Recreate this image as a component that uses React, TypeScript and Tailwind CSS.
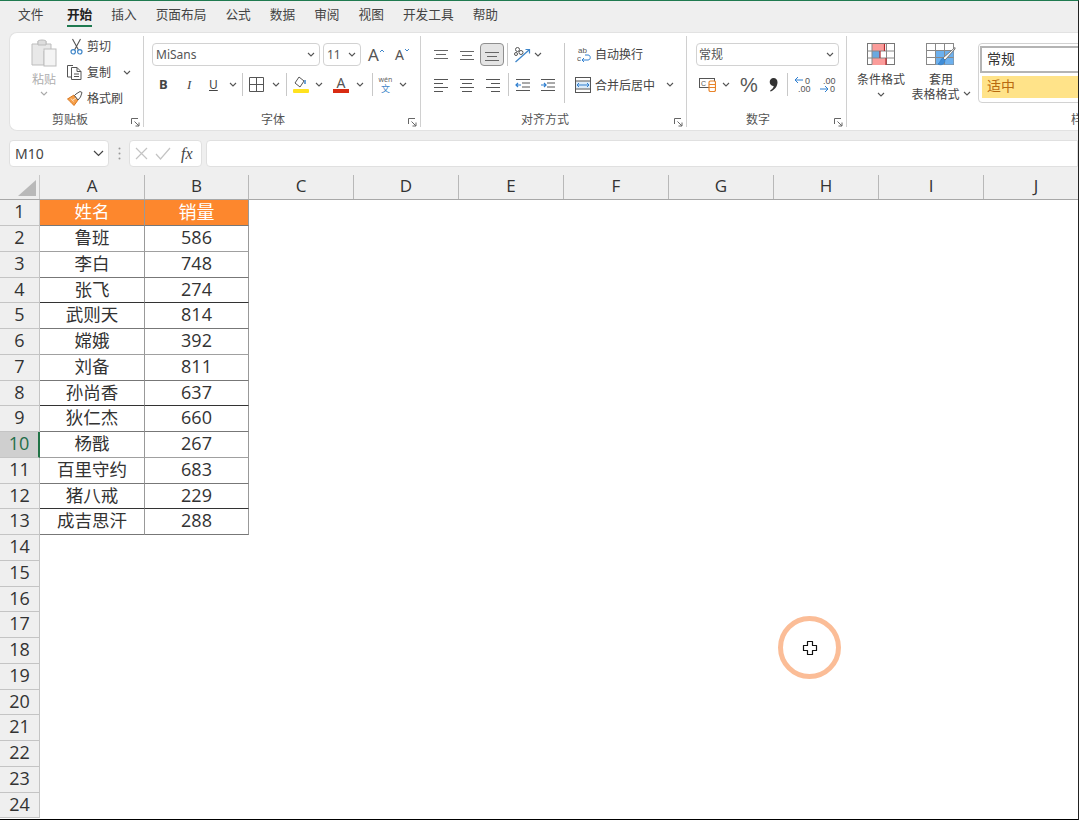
import React from "react";

const FONT = { fontFamily: '"Noto Sans CJK SC", "Noto Sans", sans-serif' };
const LATIN = { fontFamily: '"Noto Sans", sans-serif' };

const Chev = ({ className = "" }: { className?: string }) => (
  <svg width="8" height="5" viewBox="0 0 8 5" className={"shrink-0 " + className} fill="none" stroke="#555" strokeWidth="1.1">
    <path d="M1 1l3 3 3-3" />
  </svg>
);

const Launcher = () => (
  <svg width="9" height="9" viewBox="0 0 9 9" fill="none" stroke="#666" strokeWidth="1" className="absolute right-[3px] bottom-[0px]">
    <path d="M.5 6V.5H7M3.5 3.5L8 8M8 4.5V8H4.5" />
  </svg>
);

const Sep = ({ className = "" }: { className?: string }) => <div className={"w-px h-[23px] shrink-0 bg-[#c8c8c8] " + className} />;

const Lines = ({ kind }: { kind: "l" | "c" | "r" }) => {
  const ws = kind === "l" ? [[1, 15], [1, 10], [1, 15], [1, 10]] : kind === "c" ? [[1, 15], [3, 13], [1, 15], [3, 13]] : [[1, 15], [6, 15], [1, 15], [6, 15]];
  return (
    <svg width="16" height="16" viewBox="0 0 16 16" stroke="#555" strokeWidth="1" className="shrink-0">
      {ws.map(([a, b], i) => (
        <path key={i} d={`M${a} ${2.5 + i * 4}H${b}`} />
      ))}
    </svg>
  );
};

const VAlign = ({ pos }: { pos: number }) => (
  <svg width="16" height="14" viewBox="0 0 16 14" stroke="#666" strokeWidth="1" className="shrink-0">
    <path d={`M1 ${pos + 0.5}H15M3 ${pos + 4.5}H13M1 ${pos + 8.5}H15`} />
  </svg>
);

const Tab = ({ t, on }: { t: string; on?: boolean }) => (
  <div className={"relative h-[26px] flex items-center whitespace-nowrap " + (on ? "ml-[4.5px] font-bold text-[#222]" : "text-[#444]")}>
    {t}
    {on && <div className="absolute left-0 right-0 bottom-0 h-[2px] bg-[#1f7a50]" />}
  </div>
);

const GroupLabel = ({ t, cls }: { t: string; cls: string }) => (
  <div className={"absolute top-[74px] text-[12px] leading-[18px] text-[#555] whitespace-nowrap " + cls}>{t}</div>
);

const Paste = () => (
  <svg width="30" height="30" viewBox="0 0 30 30" fill="none" className="shrink-0">
    <path d="M3 6h6V3h8v3h5v7H15v14H3z" fill="#e8e8e8" stroke="#bdbdbd" />
    <path d="M9 3.5c0-2 8-2 8 0V7H9z" fill="#ddd" stroke="#bbb" />
    <rect x="15" y="11" width="12" height="17" fill="#f4f4f4" stroke="#bdbdbd" />
  </svg>
);

const Cut = () => (
  <svg width="13" height="17" viewBox="0 0 13 17" fill="none" className="shrink-0">
    <path d="M2.5 1l6 11M10.5 1l-6 11" stroke="#555" strokeWidth="1.1" />
    <circle cx="3.2" cy="13.8" r="2.2" stroke="#3f86c9" strokeWidth="1.2" />
    <circle cx="9.8" cy="13.8" r="2.2" stroke="#3f86c9" strokeWidth="1.2" />
  </svg>
);

const Copy = () => (
  <svg width="15" height="16" viewBox="0 0 15 16" fill="none" stroke="#555" strokeWidth="1" className="shrink-0">
    <path d="M4 13H.5V1.5H6" />
    <path d="M4.5 3.5H10l4 4v8H4.5zM10 3.5v4h4M7 10h5M7 12.5h5" />
  </svg>
);

const Brush = () => (
  <svg width="16" height="15" viewBox="0 0 16 15" fill="none" className="shrink-0">
    <path d="M.5 8L7 4l4 5-4 5.5C5 12.5 3 10 .5 8z" fill="#f6a04a" stroke="#d9771f" />
    <path d="M6 9l3-2M4 7.500l2.500 3" stroke="#fff" strokeWidth=".7" />
    <path d="M7.500 4.500l3.500 4.500 2.500-3L15 1.500l-2-1L9 3z" fill="#fff" stroke="#555" />
  </svg>
);

const Orientation = () => (
  <svg width="18" height="17" viewBox="0 0 18 17" fill="none" className="shrink-0">
    <path d="M2.5 16L16 4" stroke="#3f86c9" strokeWidth="1.3" />
    <path d="M12.5 3.5H16.5V7.5" stroke="#3f86c9" strokeWidth="1.2" />
    <circle cx="4.5" cy="3.5" r="2" stroke="#555" />
    <circle cx="8" cy="6.5" r="2" stroke="#555" />
    <circle cx="3" cy="8" r="1.5" stroke="#555" />
  </svg>
);

const Indent = ({ inc }: { inc?: boolean }) => (
  <svg width="16" height="14" viewBox="0 0 16 14" fill="none" className="shrink-0">
    <path d="M1 1.5H15M7 5H15M7 9H15M1 12.5H15" stroke="#555" />
    <path d={inc ? "M1 7H6M4 5l2 2-2 2" : "M6 7H1M3 5L1 7l2 2"} stroke="#2f7fd0" strokeWidth="1.2" />
  </svg>
);

const Merge = () => (
  <svg width="16" height="16" viewBox="0 0 16 16" fill="none" className="shrink-0">
    <rect x=".5" y=".5" width="15" height="15" stroke="#555" />
    <rect x="1" y="4.5" width="14" height="7" fill="#dcebf8" />
    <path d="M.5 4H15.5M.5 12H15.5" stroke="#555" />
    <path d="M2 8h12M4 6L2 8l2 2M12 6l2 2-2 2" stroke="#2f7fd0" />
  </svg>
);

const CondFormat = () => (
  <svg width="29" height="23" viewBox="0 0 29 23" fill="none" className="shrink-0">
    <rect x=".5" y=".5" width="27" height="21" fill="#fff" stroke="#777" />
    <rect x="5" y="1" width="12.5" height="7" fill="#fb9c9a" />
    <rect x="5" y="8" width="8" height="7" fill="#6aa9e0" />
    <rect x="5" y="15" width="14" height="7" fill="#fb9c9a" />
    <path d="M.5 8H27.5M.5 15H27.5M5 .5V21.5M19.5 .5V21.5" stroke="#888" />
    <path d="M17.5 1v7M13 8v7M19 15v7" stroke="#b3262b" strokeWidth="1.2" />
  </svg>
);

const TableFormat = () => (
  <svg width="30" height="26" viewBox="0 0 30 26" fill="none" className="shrink-0">
    <rect x=".5" y=".5" width="27" height="21" fill="#fff" stroke="#888" />
    <rect x="9.5" y="7.5" width="18" height="14" fill="#6cb0ee" />
    <path d="M.5 7.5H27.5M.5 14.5H27.5M9.5 .5V21.5M18.5 .5V21.5" stroke="#888" />
    <path d="M29 4.5L17 15l2 2L29 6z" fill="#fff" stroke="#777" />
    <path d="M17 15c-3 1-2 4-5 6 3 2 7 0 7-4z" fill="#3f8dd8" stroke="#2f78c0" strokeWidth=".6" />
  </svg>
);

const Comma = () => (
  <svg width="9" height="14" viewBox="0 0 9 14" fill="#333" className="shrink-0">
    <path d="M4.5 0C7 0 8.5 1.8 8.5 4.2 8.5 8.5 5.5 12 1.5 13.5L1 12.7C3.300 11.3 4.5 9.700 4.700 8 2.300 8 .7 6.300.7 4 .7 1.700 2.300 0 4.500 0z" />
  </svg>
);

const Clipboard = () => (
  <div className="relative w-[134px] h-[91px] border-r border-[#d0d0d0] shrink-0">
    <div className="flex pl-[19px] pt-[2px]">
      <div className="w-[30px] flex flex-col items-center">
        <Paste />
        <div className="text-[12px] leading-[18px] mt-[2px] text-[#aeaeae]">粘贴</div>
        <Chev className="mt-[3px] opacity-50" />
      </div>
      <div className="ml-[7px] mt-[-5px] flex flex-col">
        <div className="h-[26px] flex items-center">
          <div className="w-[21px] pl-[4px] shrink-0"><Cut /></div>
          <span className="text-[12px] text-[#444]">剪切</span>
        </div>
        <div className="h-[26px] flex items-center">
          <div className="w-[21px] pl-[1px] shrink-0"><Copy /></div>
          <span className="text-[12px] text-[#444]">复制</span>
          <Chev className="ml-[12px]" />
        </div>
        <div className="h-[26px] flex items-center">
          <div className="w-[21px] pl-[1px] shrink-0"><Brush /></div>
          <span className="text-[12px] text-[#444] whitespace-nowrap">格式刷</span>
        </div>
      </div>
    </div>
    <GroupLabel t="剪贴板" cls="left-[42px]" />
    <Launcher />
  </div>
);

const FontGroup = () => (
  <div className="relative w-[277px] h-[91px] border-r border-[#d0d0d0] shrink-0">
    <div className="flex items-center pl-[8px] pt-[7px]">
      <div className="w-[168px] h-[23px] rounded-[4px] border border-[#d2d2d2] flex items-center justify-between pl-[3px] pr-[4px] text-[12px] text-[#555]">
        <span style={LATIN}>MiSans</span>
        <Chev />
      </div>
      <div className="ml-[3px] w-[38px] h-[23px] rounded-[4px] border border-[#d2d2d2] flex items-center justify-between pl-[3px] pr-[4px] text-[12px] text-[#555]">
        <span style={LATIN}>11</span>
        <Chev />
      </div>
      <div className="ml-[7px] w-[18px] flex items-start text-[17px] leading-[20px] text-[#555]" style={LATIN}>
        A<svg width="6" height="5" viewBox="0 0 6 5" fill="none" stroke="#3f86c9" className="mt-[3px] shrink-0"><path d="M1 4l2-2 2 2" /></svg>
      </div>
      <div className="ml-[9px] w-[16px] flex items-start text-[14px] leading-[20px] text-[#555]" style={LATIN}>
        A<svg width="6" height="5" viewBox="0 0 6 5" fill="none" stroke="#3f86c9" className="mt-[3px] shrink-0"><path d="M1 1l2 2 2-2" /></svg>
      </div>
    </div>
    <div className="flex items-center h-[23px] mt-[7px] pl-[8px]">
      <span className="w-[10px] ml-[7px] text-[13px] font-bold text-[#444]" style={LATIN}>B</span>
      <span className="w-[10px] ml-[18px] text-[13px] italic text-[#444]" style={{ fontFamily: '"Liberation Serif", serif' }}>I</span>
      <span className="w-[12px] ml-[12px] text-[12px] underline text-[#444]" style={LATIN}>U</span>
      <Chev className="ml-[8px]" />
      <Sep className="ml-[5px]" />
      <svg width="16" height="16" viewBox="0 0 16 16" fill="none" stroke="#555" className="ml-[6px] shrink-0"><path d="M.5.5h14v14H.5zM7.5.5v14M.5 7.5h14" /></svg>
      <Chev className="ml-[7px]" />
      <Sep className="ml-[6px]" />
      <div className="ml-[5px] w-[17px] flex flex-col items-center shrink-0">
        <svg width="15" height="13" viewBox="0 0 15 13" fill="none"><path d="M2 7l4-6 5 4-4 6z" stroke="#555" /><path d="M12 4v4" stroke="#3f86c9" strokeWidth="1.5" /></svg>
        <div className="w-[16px] h-[4px] bg-[#ffe21f] rounded-[1px]" />
      </div>
      <Chev className="ml-[6px]" />
      <div className="ml-[10px] w-[16px] flex flex-col items-center shrink-0">
        <span className="text-[14px] leading-[13px] text-[#555]" style={LATIN}>A</span>
        <div className="w-[16px] h-[4px] bg-[#d92b12]" />
      </div>
      <Chev className="ml-[7px]" />
      <Sep className="ml-[8px]" />
      <div className="ml-[5px] w-[15px] flex flex-col items-center shrink-0">
        <span className="text-[7px] leading-[8px] text-[#666]" style={LATIN}>wén</span>
        <span className="text-[9px] leading-[10px] text-[#3f86c9]">文</span>
      </div>
      <Chev className="ml-[6px]" />
    </div>
    <GroupLabel t="字体" cls="left-[117px]" />
    <Launcher />
  </div>
);

const AlignGroup = () => (
  <div className="relative w-[266px] h-[91px] border-r border-[#d0d0d0] shrink-0 flex items-start">
    <div className="w-[143px] shrink-0">
      <div className="flex items-center pt-[7px] pl-[12px]">
        <VAlign pos={2} />
        <div className="ml-[10px]"><VAlign pos={3} /></div>
        <div className="ml-[5px] w-[24px] h-[23px] rounded-[4px] bg-[#e4e4e4] border border-[#8f8f8f] flex items-center justify-center"><VAlign pos={4} /></div>
        <Sep className="ml-[3px]" />
        <div className="ml-[5px]"><Orientation /></div>
        <Chev className="ml-[3px]" />
      </div>
      <div className="flex items-center h-[23px] mt-[7px] pl-[12px]">
        <Lines kind="l" />
        <div className="ml-[10px]"><Lines kind="c" /></div>
        <div className="ml-[10px]"><Lines kind="r" /></div>
        <Sep className="ml-[7px]" />
        <div className="ml-[6px]"><Indent /></div>
        <div className="ml-[9px]"><Indent inc /></div>
      </div>
    </div>
    <div className="w-px h-[60px] mt-[7px] bg-[#c8c8c8] shrink-0" />
    <div className="shrink-0">
      <div className="flex items-center h-[23px] mt-[7px] ml-[12px]">
        <svg width="15" height="17" viewBox="0 0 15 17" fill="none" className="shrink-0">
          <text x="1" y="7" fontSize="8" fill="#555" fontFamily="Liberation Sans">ab</text>
          <text x="0" y="15" fontSize="8" fill="#555" fontFamily="Liberation Sans">c</text>
          <path d="M5 14h6c3 0 3-5 0-5H8M7 12l-2 2 2 2" stroke="#2f7fd0" />
        </svg>
        <span className="ml-[3px] mb-[2px] text-[12px] text-[#444] whitespace-nowrap">自动换行</span>
      </div>
      <div className="flex items-center h-[23px] mt-[7px] ml-[10px]">
        <Merge />
        <span className="ml-[4px] text-[12px] text-[#444] whitespace-nowrap">合并后居中</span>
        <Chev className="ml-[11px]" />
      </div>
    </div>
    <GroupLabel t="对齐方式" cls="left-[100px]" />
    <Launcher />
  </div>
);

const NumberGroup = () => (
  <div className="relative w-[160px] h-[91px] border-r border-[#d0d0d0] shrink-0">
    <div className="pt-[7px] pl-[9px]">
      <div className="w-[143px] h-[23px] rounded-[4px] border border-[#d2d2d2] flex items-center justify-between pl-[2px] pr-[4px] pb-[1px] text-[12px] text-[#555]">
        <span>常规</span>
        <Chev />
      </div>
    </div>
    <div className="flex items-center h-[23px] mt-[7px] pl-[12px]">
      <svg width="17" height="15" viewBox="0 0 17 15" fill="none" className="shrink-0">
        <rect x=".5" y="1.5" width="15" height="9" stroke="#555" />
        <text x="2" y="9" fontSize="7" fill="#555" fontFamily="Liberation Sans">C</text>
        <rect x="10" y="4" width="6.5" height="10.5" rx="1.5" fill="#fff" stroke="#e8842a" strokeWidth="1.2" />
        <path d="M10 7.5h6.5M10 10.5h6.5" stroke="#e8842a" />
      </svg>
      <Chev className="ml-[6px]" />
      <span className="ml-[10px] w-[18px] text-[20px] text-[#555] leading-none" style={{ fontFamily: '"Liberation Sans", sans-serif' }}>%</span>
      <div className="ml-[11px]"><Comma /></div>
      <Sep className="ml-[9px]" />
      <svg width="18" height="17" viewBox="0 0 18 17" className="ml-[6px] shrink-0" fill="none">
        <path d="M9 4H1M4 1L1 4l3 3" stroke="#2f7fd0" />
        <text x="11" y="8" fontSize="9" fill="#555" fontFamily="Liberation Sans">0</text>
        <text x="4" y="16" fontSize="9" fill="#555" fontFamily="Liberation Sans">.00</text>
      </svg>
      <svg width="18" height="17" viewBox="0 0 18 17" className="ml-[7px] shrink-0" fill="none">
        <text x="4" y="8" fontSize="9" fill="#555" fontFamily="Liberation Sans">.00</text>
        <path d="M1 13h8M6 10l3 3-3 3" stroke="#2f7fd0" />
        <text x="11" y="16" fontSize="9" fill="#555" fontFamily="Liberation Sans">0</text>
      </svg>
    </div>
    <GroupLabel t="数字" cls="left-[59px]" />
    <Launcher />
  </div>
);

const StylesGroup = () => (
  <div className="relative flex-1 h-[91px] overflow-hidden">
    <div className="flex pt-[7px]">
      <div className="ml-[10px] w-[48px] flex flex-col items-center shrink-0">
        <CondFormat />
        <div className="text-[12px] leading-[18px] mt-[4px] text-[#444] whitespace-nowrap">条件格式</div>
        <Chev className="mt-[4px]" />
      </div>
      <div className="ml-[5px] w-[62px] flex flex-col items-center shrink-0">
        <TableFormat />
        <div className="text-[12px] leading-[15px] mt-[2px] text-[#444]">套用</div>
        <div className="flex items-center text-[12px] leading-[15px] text-[#444] whitespace-nowrap">表格格式<Chev className="ml-[3px]" /></div>
      </div>
      <div className="ml-[6px] w-[120px] h-[60px] rounded-[4px] border border-[#d2d2d2] shrink-0 pt-[2px] pl-[1px]">
        <div className="h-[27px] border-2 border-[#b4b4b4] bg-white flex items-center pl-[5px] pb-[3px] text-[14px] text-[#333]">常规</div>
        <div className="mt-[3px] ml-[2px] h-[22px] bg-[#ffe389] flex items-center pl-[5px] pb-[3px] text-[14px] text-[#b86a10]">适中</div>
      </div>
    </div>
    <GroupLabel t="样式" cls="left-[224px]" />
  </div>
);

const cols = ["C", "D", "E", "F", "G", "H", "I", "J"];
const rows: { a: string; b: string; h: string }[] = [
  { a: "姓名", b: "销量", h: "h-[26px]" },
  { a: "鲁班", b: "586", h: "h-[26px]" },
  { a: "李白", b: "748", h: "h-[26px]" },
  { a: "张飞", b: "274", h: "h-[25px]" },
  { a: "武则天", b: "814", h: "h-[26px]" },
  { a: "嫦娥", b: "392", h: "h-[26px]" },
  { a: "刘备", b: "811", h: "h-[26px]" },
  { a: "孙尚香", b: "637", h: "h-[25px]" },
  { a: "狄仁杰", b: "660", h: "h-[26px]" },
  { a: "杨戬", b: "267", h: "h-[26px]" },
  { a: "百里守约", b: "683", h: "h-[26px]" },
  { a: "猪八戒", b: "229", h: "h-[25px]" },
  { a: "成吉思汗", b: "288", h: "h-[26px]" },
  { a: "", b: "", h: "h-[26px]" },
  { a: "", b: "", h: "h-[26px]" },
  { a: "", b: "", h: "h-[25px]" },
  { a: "", b: "", h: "h-[26px]" },
  { a: "", b: "", h: "h-[26px]" },
  { a: "", b: "", h: "h-[26px]" },
  { a: "", b: "", h: "h-[25px]" },
  { a: "", b: "", h: "h-[26px]" },
  { a: "", b: "", h: "h-[26px]" },
  { a: "", b: "", h: "h-[26px]" },
  { a: "", b: "", h: "h-[25px]" },
];
const lineColors = ["border-b-[#777]", "border-b-[#a0a0a0]", "border-b-[#777]", "border-b-[#333]"];

const NUM = { fontFamily: '"Open Sans", "Noto Sans CJK SC", sans-serif' };

const Sheet = () => (
  <div className="flex flex-col flex-1 bg-white relative overflow-hidden">
    <div className="flex h-[25px] bg-[#efefef] border-b border-[#a8a8a8] shrink-0 text-[17px] text-[#333]" style={NUM}>
      <div className="w-[40px] shrink-0 border-r border-[#c8c8c8] flex items-end justify-end pr-[3px] pb-[3px]">
        <svg width="18" height="16" viewBox="0 0 18 16"><path d="M18 0V16H0z" fill="#b9b9b9" /></svg>
      </div>
      <div className="w-[105px] shrink-0 border-r border-[#b8b8b8] flex items-center justify-center pb-[2px]">A</div>
      <div className="w-[104px] shrink-0 border-r border-[#b8b8b8] flex items-center justify-center pb-[2px]">B</div>
      {cols.map((c) => (
        <div key={c} className="w-[105px] shrink-0 border-r border-[#b8b8b8] flex items-center justify-center pb-[2px]">{c}</div>
      ))}
    </div>
    {rows.map((r, i) => {
      const sel = i === 9;
      const line = i < 13 ? lineColors[i % 4] : "";
      return (
        <div key={i} className={"flex shrink-0 " + r.h}>
          <div className={"w-[40px] shrink-0 border-b border-b-[#c4c4c4] flex items-center justify-center pb-[2px] text-[18px] " + (sel ? "bg-[#cfcfcf] text-[#1f6e4a] border-r-2 border-r-[#217346]" : "bg-[#efefef] text-[#333] border-r border-r-[#c4c4c4]")} style={NUM}>
            {i + 1}
          </div>
          {i < 13 && (
            <>
              <div className={"w-[105px] shrink-0 border-r border-r-[#999] border-b flex items-center justify-center pb-[2px] text-[17.5px] " + line + (i === 0 ? " bg-[#fd872d] text-white" : " bg-white text-[#333]")} style={FONT}>
                {r.a}
              </div>
              <div className={"w-[104px] shrink-0 border-r border-r-[#999] border-b flex items-center justify-center pb-[2px] text-[18px] " + line + (i === 0 ? " bg-[#fd872d] text-white" : " bg-white text-[#333]")} style={i === 0 ? FONT : NUM}>
                {r.b}
              </div>
            </>
          )}
        </div>
      );
    })}
    <div className="absolute left-0 right-0 bottom-0 h-px bg-black" />
    <div className="absolute left-[778px] top-[441px] w-[63px] h-[63px] rounded-full border-[5px] border-[#fbbd97] flex items-center justify-center">
      <svg width="16" height="16" viewBox="0 0 16 16" fill="#fff" stroke="#111" strokeWidth="1.2">
        <path d="M5.5 1.5h5v4h4v5h-4v4h-5v-4h-4v-5h4z" strokeLinejoin="round" />
      </svg>
    </div>
  </div>
);

export default function App() {
  return (
    <div className="w-[1079px] h-[820px] overflow-hidden flex flex-col bg-[#efefef] border-t border-t-[#1f7a50] border-r border-r-[#222]" style={FONT}>
      <div className="flex h-[31px] gap-[19px] pl-[18px] text-[12.7px] shrink-0">
        {["文件", "开始", "插入", "页面布局", "公式", "数据", "审阅", "视图", "开发工具", "帮助"].map((t, i) => (
          <Tab key={t} t={t} on={i === 1} />
        ))}
      </div>
      <div className="ml-[9px] h-[99px] shrink-0 bg-white rounded-l-[8px] border border-r-0 border-[#e2e2e2] flex pt-[3px]">
        <Clipboard />
        <FontGroup />
        <AlignGroup />
        <NumberGroup />
        <StylesGroup />
      </div>
      <div className="flex items-center h-[27px] mt-[9px] pl-[9px] shrink-0 text-[#444]">
        <div className="w-[100px] h-[27px] bg-white rounded-[4px] border border-[#e0e0e0] flex items-center justify-between pl-[5px] pr-[4px] text-[14px]" style={LATIN}>
          M10
          <svg width="11" height="7" viewBox="0 0 11 7" fill="none" stroke="#444" strokeWidth="1.2"><path d="M1 1l4.5 4.5L10 1" /></svg>
        </div>
        <svg width="3" height="13" viewBox="0 0 3 13" fill="#999" className="ml-[9px] shrink-0"><circle cx="1.5" cy="1.5" r="1" /><circle cx="1.5" cy="6.5" r="1" /><circle cx="1.5" cy="11.5" r="1" /></svg>
        <div className="ml-[8px] w-[73px] h-[27px] bg-white rounded-[4px] border border-[#e0e0e0] flex items-center pl-[5px] shrink-0">
          <svg width="13" height="13" viewBox="0 0 13 13" fill="none" stroke="#c4c4c4" strokeWidth="1.2"><path d="M1 1l11 11M12 1L1 12" /></svg>
          <svg width="16" height="13" viewBox="0 0 16 13" fill="none" stroke="#c4c4c4" strokeWidth="1.2" className="ml-[7px]"><path d="M1 7l4.5 5L15 1" /></svg>
          <span className="ml-[10px] text-[16px] italic text-[#444]" style={{ fontFamily: '"Liberation Serif", serif' }}>fx</span>
        </div>
        <div className="ml-[4px] flex-1 h-[27px] bg-white rounded-l-[4px] border border-[#e0e0e0]" />
      </div>
      <div className="h-[8px] shrink-0" />
      <Sheet />
    </div>
  );
}
